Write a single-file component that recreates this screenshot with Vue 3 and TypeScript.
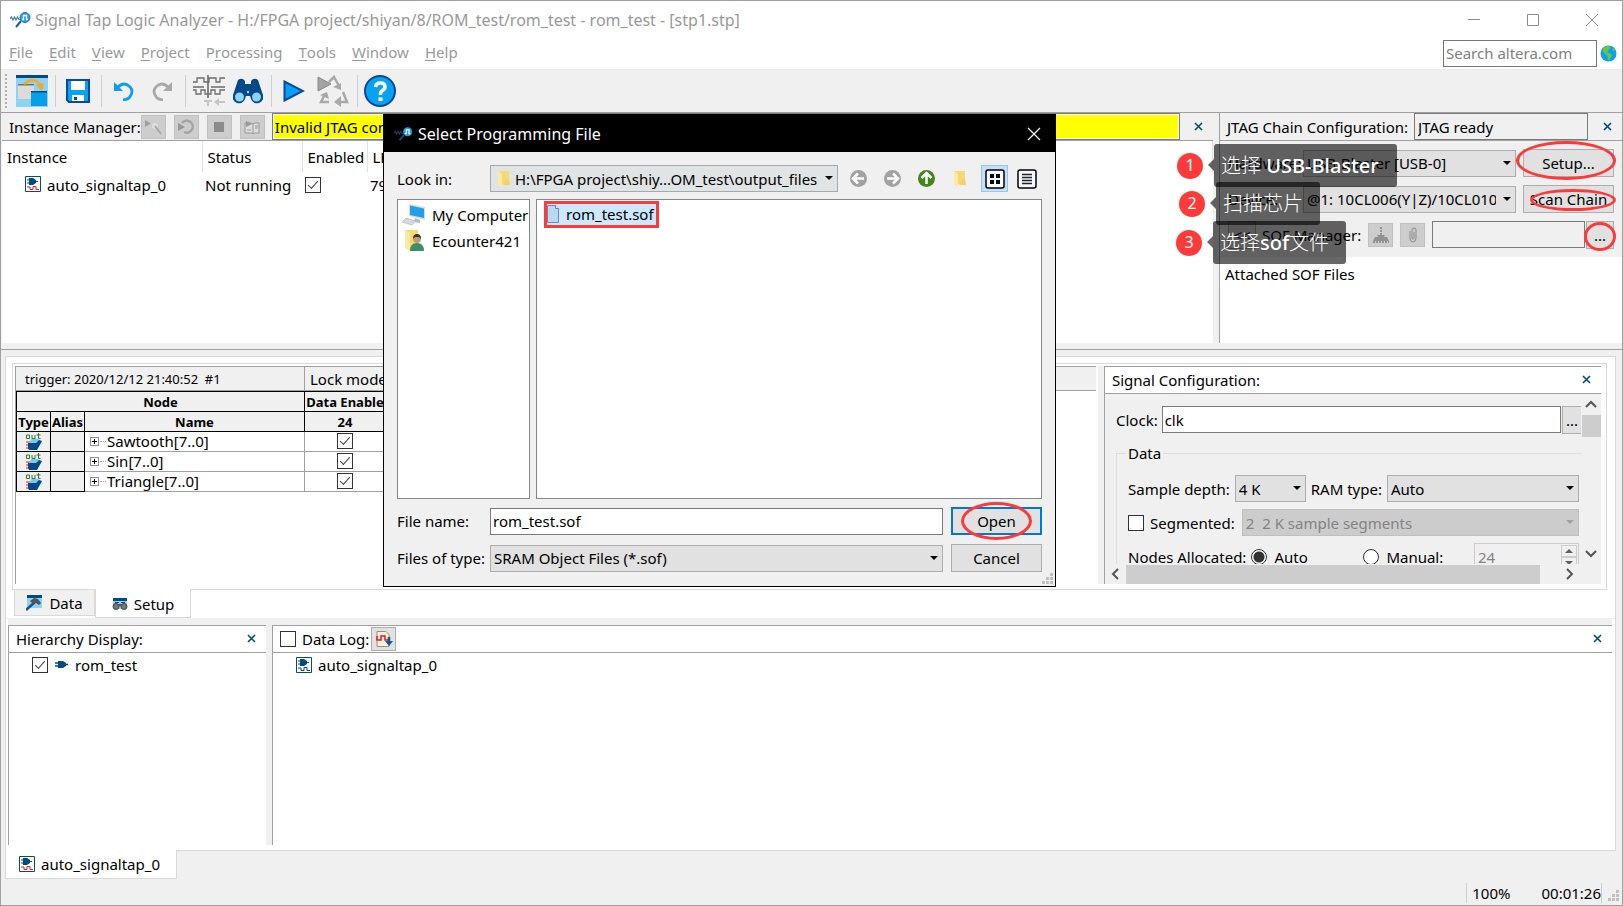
<script setup lang="ts">
import { ref } from 'vue'

interface SignalNode {
  name: string
  enabled: boolean
}

const menus: string[] = ['File', 'Edit', 'View', 'Project', 'Processing', 'Tools', 'Window', 'Help']
const accel: Record<string, number> = { Processing: 1 }
const menuParts = menus.map((m) => {
  const i = accel[m] ?? 0
  return { before: m.slice(0, i), key: m[i], after: m.slice(i + 1) }
})

const nodes = ref<SignalNode[]>([
  { name: 'Sawtooth[7..0]', enabled: true },
  { name: 'Sin[7..0]', enabled: true },
  { name: 'Triangle[7..0]', enabled: true },
])

const status = ref('Invalid JTAG configuration')
const jtagState = ref('JTAG ready')
const sofPath = ref('')
const clock = ref('clk')
const nodeCount = ref('24')
const fileName = ref('rom_test.sof')
const search = ref('')
const instanceEnabled = ref(true)
const hierarchyEnabled = ref(true)
const dataLog = ref(false)
const segmented = ref(false)
const allocation = ref('auto')
</script>

<template>
  <div class="window">
    <header class="titlebar">
      <svg class="app-icon" width="22" height="16" viewBox="0 0 22 16">
        <path d="M0 7l1.500-2 1.500 3 1.500-3 1.500 3 1.500-3 1.500 2.500h2" fill="none" stroke="#3b7ea8" stroke-width="1.200" />
        <path d="M11 9l-5 6" stroke="#1d5f94" stroke-width="2" />
        <circle cx="15" cy="5.500" r="5" fill="#2ba3e0" stroke="#1d74b0" />
        <path d="M12 7.500h1.500v-4h3v4h1.500" fill="none" stroke="#fff" stroke-width="1.300" />
      </svg>
      <h1>Signal Tap Logic Analyzer - H:/FPGA project/shiyan/8/ROM_test/rom_test - rom_test - [stp1.stp]</h1>
      <div class="caption-buttons">
        <button aria-label="Minimize"><svg width="14" height="14" viewBox="0 0 14 14"><path d="M1 6.500h12" /></svg></button>
        <button aria-label="Maximize"><svg width="14" height="14" viewBox="0 0 14 14"><path d="M1.500 1.500h11v11h-11z" /></svg></button>
        <button aria-label="Close"><svg width="14" height="14" viewBox="0 0 14 14"><path d="M1 1l12 12M13 1L1 13" /></svg></button>
      </div>
    </header>

    <nav class="menubar">
      <button v-for="m in menuParts" :key="m.key + m.after">{{ m.before }}<u>{{ m.key }}</u>{{ m.after }}</button>
      <div class="search">
        <input v-model="search" aria-label="Search altera.com" placeholder="Search altera.com" />
        <svg width="17" height="17" viewBox="0 0 17 17">
          <circle cx="8.500" cy="8.500" r="8" fill="#0da0f2" />
          <path d="M4 2l5-1 2 2-2 1-1 2-2 1 3 1 3 2-1 2-2 3-1 0-.5-4-2-2-3-3z" fill="#6cc832" />
          <path d="M13 3l2 2-1 1-2-1z" fill="#6cc832" />
        </svg>
      </div>
    </nav>

    <div class="toolbar">
      <span class="handle"></span>
      <button aria-label="Open window">
        <svg width="32" height="32" viewBox="0 0 32 32">
          <path d="M0 0h32v32H0z" fill="#8dd3f5" /><path d="M0 0h32v3H0z" fill="#004a86" />
          <path d="M2 9h16v15H2z" fill="#dedad5" /><path d="M2 9h16v1.500H2z" fill="#77736d" />
          <path d="M15 16h16v15H15z" fill="#05a0e8" /><path d="M15 16h16v1.500H15z" fill="#004a86" />
          <path d="M8 9Q17 1 25 10" fill="none" stroke="#f9a51f" stroke-width="2.500" /><path d="M20 10l8-2-2 8z" fill="#f9a51f" />
        </svg>
      </button>
      <span class="sep"></span>
      <button aria-label="Save">
        <svg width="24" height="24" viewBox="0 0 24 24">
          <path d="M1 1h22v22H3l-2-2z" fill="#05a5f5" stroke="#0b46a0" stroke-width="2" />
          <path d="M5 2h14v9H5zM6 16h12v6H6z" fill="#fff" /><path d="M8 18h3v3H8z" fill="#0b46a0" />
        </svg>
      </button>
      <span class="sep"></span>
      <button aria-label="Undo">
        <svg width="20" height="20" viewBox="0 0 20 20"><path d="M3 7Q9 0 15 5T15 17Q12 19 9 19" fill="none" stroke="#0b9ff0" stroke-width="2.800" /><path d="M0 1v9h9z" fill="#0b9ff0" /></svg>
      </button>
      <button aria-label="Redo">
        <svg width="20" height="20" viewBox="0 0 20 20"><path d="M17 7Q11 0 5 5T5 17Q8 19 11 19" fill="none" stroke="#a9a9a9" stroke-width="2.800" /><path d="M20 1v9h-9z" fill="#a9a9a9" /></svg>
      </button>
      <span class="sep"></span>
      <button class="wide" aria-label="Insert node">
        <svg width="34" height="32" viewBox="0 0 34 32" fill="none">
          <path d="M1 7h4V3h7v4h5V3h7v4h4V3h5M1 12h11M19 12h14M1 15h3v4h5v-4h4v4h6v-4h4v4h5v-4h5" stroke="#6b6b6b" stroke-width="1.300" />
          <path d="M16 0v23" stroke="#6b6b6b" stroke-width="1.600" />
          <path d="M12 26h8M16 26v5M24 27h9" stroke="#c4c4c4" stroke-width="2" /><path d="M22 27l5-4v8z" fill="#c4c4c4" />
        </svg>
      </button>
      <button aria-label="Find">
        <svg width="30" height="26" viewBox="0 0 30 26">
          <path d="M5 2Q9-1 12 3v3h6V3Q21-1 25 2l5 15a6 6 0 0 1-12 4l-1-3h-4l-1 3a6 6 0 0 1-12-4z" fill="#05498a" />
          <circle cx="6.500" cy="19" r="4.500" fill="#8dd3f5" /><circle cx="23.500" cy="19" r="4.500" fill="#8dd3f5" /><circle cx="15" cy="14" r="1.200" fill="#8dd3f5" />
        </svg>
      </button>
      <span class="sep"></span>
      <button aria-label="Run analysis">
        <svg width="22" height="22" viewBox="0 0 22 22"><path d="M1.500 1.500v19L20 11z" fill="#05a0f5" stroke="#0b46a0" stroke-width="2" /></svg>
      </button>
      <button class="wide" aria-label="Autorun analysis">
        <svg width="34" height="32" viewBox="0 0 34 32">
          <path d="M13 7l5-5 5 9M27 17l4 10h-8M13 27H5l4-8" fill="none" stroke="#a9a9a9" stroke-width="2.500" />
          <path d="M17 12l8-4v7zM25 21l-7 6 7 5zM4 20l7-3 2 7z" fill="#a9a9a9" />
          <path d="M2 2v14l13-7z" fill="#a3a3a3" stroke="#8a8a8a" />
        </svg>
      </button>
      <span class="sep"></span>
      <button aria-label="Help">
        <svg width="32" height="32" viewBox="0 0 32 32">
          <circle cx="16" cy="16" r="15" fill="#08a2f2" stroke="#0b46a0" stroke-width="2" />
          <path d="M11.500 12Q12 8 16.500 8T21 12Q21 14 18.500 15.500T16.500 20" fill="none" stroke="#fff" stroke-width="3.500" /><path d="M14.500 22.500h4v3.500h-4z" fill="#fff" />
        </svg>
      </button>
    </div>

    <main class="workspace">
      <div class="upper">
        <section class="instances">
          <div class="bar">
            <label for="status">Instance Manager:</label>
            <span class="tools">
              <button class="tool" disabled aria-label="Run"><svg width="18" height="18" viewBox="0 0 18 18"><path d="M1 2v7l6-3.500z" fill="#a0a0a0" /><circle cx="11" cy="8" r="3" fill="#ddd" /><path d="M11 8l6 8" stroke="#a8a8a8" stroke-width="2" /></svg></button>
              <button class="tool" disabled aria-label="Autorun"><svg width="18" height="18" viewBox="0 0 18 18"><path d="M5 5a6 6 0 1 1 2 9" fill="none" stroke="#a3a3a3" stroke-width="2.500" /><path d="M1 5v8l7-4z" fill="#989898" /></svg></button>
              <button class="tool" disabled aria-label="Stop"><svg width="18" height="18" viewBox="0 0 18 18"><path d="M4 4h10v10H4z" fill="#8b8b8b" /></svg></button>
              <button class="tool" disabled aria-label="Read data"><svg width="18" height="18" viewBox="0 0 18 18"><path d="M2 5h6l2 1 1-1h5v10H11l-1 1-1-1H2z" fill="#ddd" stroke="#999" /><path d="M3 3v6l6-3z" fill="#999" /><path d="M10 6v9M12 8h3M12 10h3M4 12h4" stroke="#999" /></svg></button>
            </span>
            <input id="status" v-model="status" class="status" readonly />
            <button class="close" aria-label="Close instance manager"><svg width="10" height="10" viewBox="0 0 10 10"><path d="M1 1l7 7M8 1L1 8" /></svg></button>
          </div>
          <table class="inst-table">
            <colgroup><col class="c1" /><col class="c2" /><col class="c3" /><col /></colgroup>
            <thead><tr><th>Instance</th><th>Status</th><th>Enabled</th><th>LEs: 791</th></tr></thead>
            <tbody>
              <tr>
                <td class="inst-name"><svg class="inst-icon" width="16" height="16" viewBox="0 0 16 16"><path d="M.5.5h15v15H.5z" fill="#fff" stroke="#004a86" /><path d="M2 4h3M2 7h3M10 5.500h3" stroke="#004a86" /><path d="M4 2h4l3 2v3L8 9H4z" fill="#004a86" /><path d="M2 11h3v2.500h3v-3h3v3h3" fill="none" stroke="#e31b23" /></svg>auto_signaltap_0</td>
                <td>Not running</td>
                <td><input v-model="instanceEnabled" type="checkbox" aria-label="Enable auto_signaltap_0" /></td>
                <td>791 cells</td>
              </tr>
            </tbody>
          </table>
        </section>

        <section class="jtag">
          <div class="bar">
            <label for="jtag">JTAG Chain Configuration:</label>
            <input id="jtag" v-model="jtagState" class="jtag-state" readonly />
            <button class="close" aria-label="Close JTAG configuration"><svg width="10" height="10" viewBox="0 0 10 10"><path d="M1 1l7 7M8 1L1 8" /></svg></button>
          </div>
          <div class="jtag-form">
            <div class="jtag-row">
              <label for="hw">Hardware:</label>
              <span class="combo"><select id="hw"><option>USB-Blaster [USB-0]</option></select></span>
              <button class="push">Setup...</button>
            </div>
            <div class="jtag-row">
              <label for="dev">Device:</label>
              <span class="combo"><select id="dev"><option>@1: 10CL006(Y|Z)/10CL010(Y|Z)/..</option></select></span>
              <button class="push">Scan Chain</button>
            </div>
            <div class="sof-row">
              <button class="push tiny">&lt;&lt;</button>
              <label for="sof">SOF Manager:</label>
              <button class="tool" disabled aria-label="Program device"><svg width="18" height="18" viewBox="0 0 18 18"><path d="M9 1v9M1 16h16" stroke="#929292" stroke-width="2" stroke-dasharray="2 1" /><path d="M1 15l2-4h3l-1-2h8l-1 2h3l2 4z" fill="#929292" /></svg></button>
              <button class="tool" disabled aria-label="Attach SOF"><svg width="18" height="18" viewBox="0 0 18 18"><path d="M6 5v7q0 4 3 4t3-4V4q0-2-2-2T8 4v8q0 1 1 1t1-1V6" fill="none" stroke="#8c8c8c" /></svg></button>
              <input id="sof" v-model="sofPath" class="sof" />
              <button class="push dots">...</button>
            </div>
          </div>
          <div class="attached">Attached SOF Files</div>
        </section>
      </div>

      <div class="divider"></div>

      <div class="page">
        <div class="setup">
          <section class="nodes">
            <div class="node-bar"><span class="trigger">trigger: 2020/12/12 21:40:52&nbsp; #1</span><label class="lock">Lock mode:</label></div>
            <table class="node-table">
              <colgroup><col class="n1" /><col class="n2" /><col class="n3" /><col class="n4" /></colgroup>
              <thead>
                <tr><th colspan="3">Node</th><th>Data Enable</th></tr>
                <tr><th>Type</th><th>Alias</th><th>Name</th><th>24</th></tr>
              </thead>
              <tbody>
                <tr v-for="n in nodes" :key="n.name">
                  <td class="dim"><svg width="18" height="18" viewBox="0 0 18 18"><path d="M1.500 2h3v3.500h-3zM7 2v3.500h3V2M11.500 2h4M13.500 0v5.500h2" fill="none" stroke="#2a7d2a" /><path d="M1 9h4M1 12h4M1 15h4" stroke="#e31b23" /><path d="M6 6h7l4 3-4 3H4z" fill="#7cc9ef" /><path d="M3 10h8l3-3 3 1-5 9H4l-1-2z" fill="#004a86" /></svg></td>
                  <td class="dim"></td>
                  <td class="node-name"><span class="node-cell"><button class="expander" :aria-label="'Expand ' + n.name"></button><span class="dotline"></span>{{ n.name }}</span></td>
                  <td class="mid"><input v-model="n.enabled" type="checkbox" :aria-label="'Data enable ' + n.name" /></td>
                </tr>
              </tbody>
            </table>
          </section>

          <section class="config">
            <div class="config-head"><h2>Signal Configuration:</h2><button class="close" aria-label="Close signal configuration"><svg width="10" height="10" viewBox="0 0 10 10"><path d="M1 1l7 7M8 1L1 8" /></svg></button></div>
            <div class="scroll-grid">
              <div class="config-body">
                <div class="clock-row">
                  <label for="clk">Clock:</label>
                  <input id="clk" v-model="clock" />
                  <button class="push clk-btn">...</button>
                </div>
                <fieldset>
                  <legend>Data</legend>
                  <div class="row">
                    <label for="depth">Sample depth:</label>
                    <span class="combo depth"><select id="depth"><option>4 K</option></select></span>
                    <label for="ram">RAM type:</label>
                    <span class="combo grow"><select id="ram"><option>Auto</option></select></span>
                  </div>
                  <div class="row seg-row">
                    <label class="check"><input v-model="segmented" type="checkbox" />Segmented:</label>
                    <span class="combo grow off"><select disabled aria-label="Segments"><option>2&nbsp; 2 K sample segments</option></select></span>
                  </div>
                  <div class="row alloc">
                    <span class="alloc-label">Nodes Allocated:</span>
                    <label class="radio auto"><input v-model="allocation" type="radio" value="auto" name="alloc" />Auto</label>
                    <label class="radio"><input v-model="allocation" type="radio" value="manual" name="alloc" />Manual:</label>
                    <span class="spin"><input v-model="nodeCount" disabled aria-label="Allocated nodes" /><span class="spin-btns"><i></i><i></i></span></span>
                  </div>
                </fieldset>
              </div>
              <div class="vbar"><svg width="12" height="8" viewBox="0 0 12 8"><path d="M1 7l5-5 5 5" /></svg><span class="vthumb"></span><svg class="last" width="12" height="8" viewBox="0 0 12 8"><path d="M1 1l5 5 5-5" /></svg></div>
              <div class="hbar"><svg width="8" height="12" viewBox="0 0 8 12"><path d="M7 1L2 6l5 5" /></svg><span class="hthumb"></span><svg class="last" width="8" height="12" viewBox="0 0 8 12"><path d="M1 1l5 5-5 5" /></svg></div>
            </div>
          </section>
        </div>

        <div class="tabs">
          <button class="tab">
            <svg width="16" height="16" viewBox="0 0 16 16"><path d="M1 0h15v13H1z" fill="#8dd3f5" /><path d="M1 0h15v3H1z" fill="#004a86" /><path d="M0 15L9 7" stroke="#0b58a0" stroke-width="2.500" /><path d="M4 6l4-3 4 1 3 4-2 2-3-2-3 1z" fill="#555" /></svg>Data
          </button>
          <button class="tab active">
            <svg width="16" height="16" viewBox="0 0 16 16"><path d="M1 2h14v11H1z" fill="#8dd3f5" /><path d="M1 2h14v3H1z" fill="#004a86" /><path d="M3 6.500h4M9 6.500h4" stroke="#004a86" /><circle cx="4" cy="10.500" r="3" fill="#777" stroke="#444" /><circle cx="12" cy="10.500" r="3" fill="#777" stroke="#444" /><path d="M6 9h4" stroke="#555" stroke-width="2" /></svg>Setup
          </button>
        </div>

        <div class="lower">
          <section class="hier">
            <div class="sub-head"><h2>Hierarchy Display:</h2><button class="close" aria-label="Close hierarchy display"><svg width="10" height="10" viewBox="0 0 10 10"><path d="M1 1l7 7M8 1L1 8" /></svg></button></div>
            <label class="tree-item"><input v-model="hierarchyEnabled" type="checkbox" /><svg width="13" height="10" viewBox="0 0 13 10"><path d="M0 3h4M0 6h4M9 4.500h4" stroke="#004a86" stroke-width="1.500" /><path d="M3 1h5l3 2v3L8 8H3z" fill="#004a86" /></svg>rom_test</label>
          </section>
          <section class="log">
            <div class="sub-head">
              <label class="check"><input v-model="dataLog" type="checkbox" />Data Log:</label>
              <button class="tool live" aria-label="Export log"><svg width="18" height="18" viewBox="0 0 18 18"><path d="M2 1.500h9l3 3v12H2z" fill="#fdf3dc" stroke="#a58a78" /><path d="M2 6v4h4V6h4v4h3" fill="none" stroke="#e31b23" stroke-width="1.500" /><path d="M14 7v5" stroke="#0b58a0" stroke-width="2.500" /><path d="M10 11h8l-4 5z" fill="#0b58a0" /></svg></button>
              <button class="close" aria-label="Close data log"><svg width="10" height="10" viewBox="0 0 10 10"><path d="M1 1l7 7M8 1L1 8" /></svg></button>
            </div>
            <div class="log-item"><svg class="inst-icon" width="16" height="16" viewBox="0 0 16 16"><path d="M.5.5h15v15H.5z" fill="#fff" stroke="#004a86" /><path d="M2 4h3M2 7h3M10 5.500h3" stroke="#004a86" /><path d="M4 2h4l3 2v3L8 9H4z" fill="#004a86" /><path d="M2 11h3v2.500h3v-3h3v3h3" fill="none" stroke="#004a86" /></svg>auto_signaltap_0</div>
          </section>
        </div>
      </div>

      <div class="file-tabs">
        <button class="file-tab"><svg class="inst-icon" width="16" height="16" viewBox="0 0 16 16"><path d="M.5.5h15v15H.5z" fill="#fff" stroke="#004a86" /><path d="M2 4h3M2 7h3M10 5.500h3" stroke="#004a86" /><path d="M4 2h4l3 2v3L8 9H4z" fill="#004a86" /><path d="M2 11h3v2.500h3v-3h3v3h3" fill="none" stroke="#e31b23" /></svg>auto_signaltap_0</button>
      </div>
    </main>

    <footer class="statusbar">
      <span class="zoom">100%</span><span class="time">00:01:26</span>
      <svg class="grip" width="11" height="11" viewBox="0 0 11 11"><path d="M8 0h3v3H8zM4 4h3v3H4zM8 4h3v3H8zM0 8h3v3H0zM4 8h3v3H4zM8 8h3v3H8z" fill="#bfbfbf" /></svg>
    </footer>

    <div class="dialog" role="dialog" aria-label="Select Programming File">
      <div class="dlg-title">
        <svg class="app-icon" width="20" height="16" viewBox="0 0 22 16">
          <path d="M0 7l1.500-2 1.500 3 1.500-3 1.500 3 1.500-3 1.500 2.500h2" fill="none" stroke="#17435e" stroke-width="1.200" />
          <path d="M11 9l-5 6" stroke="#174a72" stroke-width="2" />
          <circle cx="15" cy="5.500" r="5" fill="#1d9be0" /><path d="M12 7.500h1.500v-4h3v4h1.500" fill="none" stroke="#fff" stroke-width="1.300" />
        </svg>
        <h2>Select Programming File</h2>
        <button aria-label="Close dialog"><svg width="14" height="14" viewBox="0 0 14 14"><path d="M1 1l12 12M13 1L1 13" stroke="#fff" stroke-width="1.200" /></svg></button>
      </div>
      <div class="dlg-body">
        <div class="look">
          <label for="look">Look in:</label>
          <span class="combo grow folder-combo">
            <svg width="13" height="18" viewBox="0 0 13 18"><path d="M1 1h10v13H1z" fill="#f8d775" /><path d="M0 1l4 3v13l-4-2z" fill="#fde9a6" /><path d="M8 9h3l1 6H5z" fill="#f5cf6a" /></svg>
            <select id="look"><option>H:\FPGA project\shiy...OM_test\output_files</option></select>
          </span>
          <button aria-label="Back"><svg width="19" height="19" viewBox="0 0 19 19"><circle cx="9.500" cy="9.500" r="8.500" fill="#a2a2a2" /><path d="M4 9.500h11M9 4.500l-5 5 5 5" fill="none" stroke="#fff" stroke-width="2.500" /></svg></button>
          <button aria-label="Forward"><svg width="19" height="19" viewBox="0 0 19 19"><circle cx="9.500" cy="9.500" r="8.500" fill="#a2a2a2" /><path d="M4 9.500h11M10 4.500l5 5-5 5" fill="none" stroke="#fff" stroke-width="2.500" /></svg></button>
          <button aria-label="Parent directory"><svg width="19" height="19" viewBox="0 0 19 19"><circle cx="9.500" cy="9.500" r="8.500" fill="#42851c" /><path d="M9.500 15V4M4.500 9l5-5 5 5" fill="none" stroke="#fff" stroke-width="2.500" /></svg></button>
          <button aria-label="New folder"><svg width="13" height="18" viewBox="0 0 13 18"><path d="M1 1h10v13H1z" fill="#f8d775" /><path d="M0 1l4 3v13l-4-2z" fill="#fde9a6" /><path d="M8 9h3l1 6H5z" fill="#f5cf6a" /></svg></button>
          <button class="picked" aria-label="List view"><svg width="20" height="20" viewBox="0 0 20 20"><rect x="1" y="1" width="18" height="18" rx="2" fill="#f3f9ff" stroke="#000" stroke-width="1.500" /><path d="M5 5h4v4H5zM11 5h4v4h-4zM5 11h4v4H5zM11 11h4v4h-4z" /></svg></button>
          <button aria-label="Detail view"><svg width="20" height="20" viewBox="0 0 20 20"><rect x="1" y="1" width="18" height="18" rx="2" fill="#f3f9ff" stroke="#000" stroke-width="1.500" /><path d="M5 5.500h10M5 8.500h10M5 11.500h10M5 14.500h10" stroke="#222" stroke-width="1.500" /></svg></button>
        </div>
        <div class="panes">
          <ul class="places">
            <li><svg width="24" height="22" viewBox="0 0 24 22"><path d="M7 0l16 3v13L7 12z" fill="#d9dde0" /><path d="M8 1.500l14 3V14L8 11z" fill="#239fea" /><path d="M13 14l5 2v3l-6-1z" fill="#b5bbc0" /><path d="M0 18l4-4 10 3-4 4z" fill="#d5d9dc" stroke="#9aa" stroke-width=".5" /></svg>My Computer</li>
            <li><svg width="24" height="22" viewBox="0 0 24 22"><path d="M4 0h12v18H4z" fill="#f8d775" /><path d="M3 0l5 3v18l-5-3z" fill="#fde9a6" /><circle cx="15" cy="9" r="4" fill="#c29a72" /><path d="M11 9q0-5 4-5t4 5l-2-2h-4z" fill="#333" /><path d="M8 21q0-8 7-8t7 8z" fill="#3e8e68" /></svg>Ecounter421</li>
          </ul>
          <div class="files">
            <button class="file"><svg width="12" height="18" viewBox="0 0 12 18"><path d="M.5.500h8l3 3v14H.5z" fill="#b9d8f2" stroke="#6c8ba8" /><path d="M8.500.500v3h3" fill="#fff" stroke="#6c8ba8" /></svg>rom_test.sof</button>
          </div>
        </div>
        <div class="dlg-row">
          <label for="fname">File name:</label>
          <input id="fname" v-model="fileName" />
          <button class="push open">Open</button>
        </div>
        <div class="dlg-row">
          <label for="ftype">Files of type:</label>
          <span class="combo grow"><select id="ftype"><option>SRAM Object Files (*.sof)</option></select></span>
          <button class="push">Cancel</button>
        </div>
      </div>
      <svg class="grip dlg-grip" width="11" height="11" viewBox="0 0 11 11"><path d="M8 0h3v3H8zM4 4h3v3H4zM8 4h3v3H8zM0 8h3v3H0zM4 8h3v3H4zM8 8h3v3H8z" fill="#bfbfbf" /></svg>
      <span class="ring ring-open"></span>
    </div>

    <div class="note note-1"><b>1</b><span>选择 <em>USB-Blaster</em></span></div>
    <div class="note note-2"><b>2</b><span>扫描芯片</span></div>
    <div class="note note-3"><b>3</b><span>选择<em>sof</em>文件</span></div>
    <span class="ring ring-setup"></span>
    <span class="ring ring-scan"></span>
    <span class="ring ring-dots"></span>
  </div>
</template>

<style>
body {
  margin: 0;
}
</style>

<style scoped>
.window,
.window * {
  box-sizing: border-box;
}
.window {
  position: relative;
  display: flex;
  flex-direction: column;
  height: 100vh;
  border: 1px solid #a0a0a0;
  background: #f0f0f0;
  color: #000;
  font: 15px/20px "Noto Sans", "Open Sans", sans-serif;
  overflow: hidden;
}
button,
input,
select {
  margin: 0;
  font: inherit;
  color: inherit;
}
button {
  display: flex;
  align-items: center;
  justify-content: center;
  padding: 0;
  border: 0;
  background: none;
  white-space: nowrap;
}
h1,
h2 {
  margin: 0;
  font: inherit;
}
label {
  white-space: nowrap;
}
svg {
  flex: none;
}
.titlebar {
  display: flex;
  align-items: center;
  flex: none;
  height: 37px;
  padding: 0 1px 0 9px;
  background: #fff;
  color: #999;
}
.titlebar h1 {
  margin-left: 3px;
  flex: 1;
  font-size: 16px;
  white-space: nowrap;
}
.caption-buttons {
  display: flex;
}
.caption-buttons button {
  width: 59px;
  height: 36px;
}
.caption-buttons path {
  fill: none;
  stroke: #8a8a8a;
}
.menubar {
  display: flex;
  align-items: center;
  flex: none;
  gap: 16px;
  height: 32px;
  padding: 0 5px 4px 8px;
  background: #fff;
  color: #999;
  border-bottom: 1px solid #eaeaea;
}
.menubar u {
  text-underline-offset: 2px;
}
.search {
  display: flex;
  align-items: center;
  gap: 3px;
  margin: 3px 0 0 auto;
}
.search input {
  width: 154px;
  height: 27px;
  padding: 0 2px;
  border: 1px solid #767676;
}
.search input::placeholder {
  color: #808080;
}
input {
  background: #fff;
  border: 1px solid #7a7a7a;
  border-radius: 0;
  outline: none;
}
.toolbar {
  display: flex;
  align-items: center;
  flex: none;
  gap: 6px;
  height: 43px;
  padding: 0 4px;
  border-bottom: 1px solid #a0a0a0;
}
.handle {
  width: 2px;
  height: 34px;
  margin-right: 3px;
  border-left: 2px dotted #b0b0b0;
}
.toolbar button {
  width: 32px;
  height: 34px;
}
.toolbar .wide {
  width: 34px;
}
.sep {
  width: 1px;
  height: 32px;
  margin-left: 1px;
  background: #cfcfcf;
}
.workspace {
  display: grid;
  flex: 1;
  min-height: 0;
  grid-template-rows: minmax(0, 230fr) 13px minmax(0, 494fr) 28px;
}
.upper {
  display: flex;
  gap: 6px;
  min-height: 0;
}
.instances {
  flex: 1;
  min-width: 0;
  background: #fff;
  margin-left: 1px;
  overflow: hidden;
}
.bar {
  display: flex;
  align-items: center;
  height: 28px;
  background: #f0f0f0;
  border-bottom: 1px solid #a0a0a0;
  padding-left: 7px;
}
.tools {
  display: flex;
  gap: 8px;
  margin-right: 7px;
}
.tool {
  width: 25px;
  height: 24px;
  flex: none;
  border: 1px solid #c0c0c0;
  background: #cdcdcd;
}
.status {
  flex: 1;
  min-width: 0;
  height: 27px;
  padding: 0 2px;
  background: #ff0;
  border: 1px solid #7a7a7a;
  box-shadow: inset 0 0 0 1px #fff;
}
.close {
  flex: none;
  width: 24px;
  height: 24px;
}
.close path {
  fill: none;
  stroke: #004a86;
  stroke-width: 1.6;
}
.instances .close {
  margin: 0 2px 0 7px;
}
.inst-table {
  width: 100%;
  table-layout: fixed;
  border-collapse: collapse;
}
.c1 {
  width: 200px;
}
.c2 {
  width: 100px;
}
.c3 {
  width: 65px;
}
.inst-table th {
  height: 31px;
  padding: 1px 5px 0;
  border-right: 1px solid #e0e0e0;
  font-weight: 400;
  text-align: left;
  white-space: nowrap;
}
.inst-table td {
  height: 26px;
  padding: 0 3px;
  white-space: nowrap;
}
.inst-table .inst-name {
  padding-left: 23px;
}
.inst-icon {
  margin-right: 6px;
}
.inst-name .inst-icon {
  vertical-align: -1px;
}
input[type='checkbox'] {
  appearance: none;
  display: inline-block;
  position: relative;
  flex: none;
  width: 16px;
  height: 16px;
  border: 1px solid #333;
  vertical-align: -2px;
}
input[type='checkbox']:checked::after {
  content: '';
  display: block;
  width: 9px;
  height: 4px;
  margin: 3px 2px;
  border: solid #444;
  border-width: 0 0 1px 1px;
  transform: rotate(-48deg);
}
.jtag {
  display: flex;
  flex-direction: column;
  flex: 0 0 403px;
  min-width: 0;
  border-left: 1px solid #a0a0a0;
}
.jtag-state {
  width: 174px;
  height: 27px;
  margin: 0 8px 0 auto;
  padding: 0 3px;
  background: #f0f0f0;
}
.jtag .close {
  margin-right: 2px;
}
.jtag-form {
  display: flex;
  flex-direction: column;
  gap: 9px;
  padding: 8px 8px 9px;
}
.jtag-row {
  display: grid;
  grid-template-columns: 68px minmax(0, 1fr) 91px;
  gap: 7px;
  align-items: center;
  height: 27px;
}
.sof-row {
  display: flex;
  align-items: center;
  height: 27px;
}
.tiny {
  width: 28px;
  margin-right: 6px;
}
.sof-row .tool {
  margin-left: 7px;
}
.sof {
  flex: 1;
  min-width: 0;
  height: 27px;
  margin: 0 1px 0 7px;
  background: #f0f0f0;
}
.dots {
  width: 28px;
}
.push {
  flex: none;
  height: 28px;
  background: #e1e1e1;
  border: 1px solid #adadad;
}
.combo {
  position: relative;
  display: block;
  min-width: 0;
}
.combo select {
  appearance: none;
  display: block;
  width: 100%;
  height: 27px;
  padding: 0 19px 0 3px;
  border: 1px solid #adadad;
  border-radius: 0;
  background: #e1e1e1;
}
.combo::after {
  content: '';
  position: absolute;
  right: 5px;
  top: 11px;
  border: 4px solid transparent;
  border-top-color: #000;
  border-bottom: 0;
}
.combo.off select {
  background: #ccc;
  border-color: #bfbfbf;
  color: #838383;
  opacity: 1;
}
.combo.off::after {
  border-top-color: #a0a0a0;
}
.grow {
  flex: 1;
}
.attached {
  flex: 1;
  padding: 7px 5px;
  background: #fff;
}
.divider {
  align-self: start;
  height: 7px;
  border-bottom: 1px solid #a0a0a0;
}
.page {
  display: grid;
  grid-template-rows: minmax(0, 227fr) 29px 6px minmax(0, 220fr);
  margin: 0 6px 0 4px;
  padding: 6px 0 5px;
  background: #fff;
  border: 1px solid #d9d9d9;
}
.setup {
  display: flex;
  gap: 2px;
  margin: 0 8px 0 6px;
  padding: 2px 5px 5px 2px;
  border: 1px solid #d9d9d9;
  min-height: 0;
}
.nodes {
  flex: 1;
  min-width: 0;
  overflow: hidden;
  border: 1px solid #a0a0a0;
  border-width: 1px 0 0 1px;
}
.node-bar {
  display: flex;
  height: 24px;
  background: #f0f0f0;
  border-bottom: 1px solid #a0a0a0;
}
.trigger {
  width: 289px;
  padding: 2px 0 0 9px;
  border-right: 1px solid #a0a0a0;
  font-size: 13px;
}
.lock {
  padding: 2px 5px 0;
}
.node-table {
  width: 370px;
  table-layout: fixed;
  border-collapse: collapse;
}
.n1 {
  width: 34px;
}
.n2 {
  width: 34px;
}
.n3 {
  width: 220px;
}
.node-table th {
  height: 20px;
  padding: 1px 0 0;
  overflow: hidden;
  background: #f0f0f0;
  border: 1px solid #000;
  font-size: 13px;
  line-height: 18px;
  white-space: nowrap;
}
.node-table td {
  height: 20px;
  padding: 0;
  border: 1px solid #a0a0a0;
  line-height: 17px;
}
.node-table .dim {
  background: #f0f0f0;
  border-color: #000;
  text-align: center;
}
.node-table svg {
  display: block;
  margin: 0 auto;
}
.mid {
  text-align: center;
}
.node-cell {
  display: flex;
  align-items: center;
}
.expander {
  position: relative;
  width: 9px;
  height: 9px;
  margin-left: 5px;
  border: 1px solid #909090;
  background: linear-gradient(#000, #000) center / 5px 1px no-repeat, linear-gradient(#000, #000) center / 1px 5px no-repeat, #fff;
}
.dotline {
  width: 6px;
  margin: 0 1px;
  border-top: 1px dotted #a0a0a0;
}
.config {
  display: flex;
  flex-direction: column;
  flex: 0 0 503px;
  min-width: 0;
  border-left: 6px solid #f0f0f0;
}
.config-head {
  display: flex;
  align-items: center;
  justify-content: space-between;
  flex: none;
  height: 28px;
  padding: 0 2px 0 7px;
  border: 1px solid #a0a0a0;
  border-right: 0;
}
.scroll-grid {
  display: grid;
  flex: 1;
  min-height: 0;
  grid-template: minmax(0, 1fr) 20px / minmax(0, 1fr) 20px;
  border-left: 1px solid #a0a0a0;
  background: #f0f0f0;
}
.config-body {
  overflow: hidden;
  padding: 12px 0 0 11px;
}
.clock-row {
  display: flex;
  align-items: center;
  height: 27px;
}
.clock-row input {
  flex: 1;
  min-width: 0;
  height: 27px;
  margin: 0 1px 0 4px;
  padding: 0 2px;
}
.clk-btn {
  width: 19px;
  border-right: 0;
  overflow: hidden;
}
fieldset {
  margin: 10px 0 0;
  padding: 12px 2px 0 11px;
  border: 1px solid #dcdcdc;
  border-right: 0;
}
legend {
  margin-left: -2px;
  padding: 0 2px;
}
.row {
  display: flex;
  align-items: center;
  gap: 5px;
  height: 27px;
  margin-bottom: 7px;
}
.depth {
  width: 71px;
}
.seg-row {
  gap: 7px;
}
.check {
  display: flex;
  align-items: center;
  gap: 6px;
}
.radio {
  display: flex;
  align-items: center;
  gap: 7px;
}
.radio.auto {
  width: 107px;
}
input[type='radio'] {
  appearance: none;
  width: 16px;
  height: 16px;
  border: 1px solid #333;
  border-radius: 50%;
}
input[type='radio']:checked {
  background: radial-gradient(circle, #333 0 5px, #fff 6px);
}
.spin {
  display: flex;
  width: 105px;
  height: 27px;
  margin-left: auto;
  border: 1px solid #ccc;
}
.spin input {
  flex: 1;
  min-width: 0;
  border: 0;
  padding: 0 3px;
  background: none;
  color: #838383;
}
.spin-btns {
  display: grid;
  width: 17px;
  padding: 1px 1px 0 0;
}
.spin-btns i {
  display: grid;
  place-items: center;
  border: 1px solid #ccc;
}
.spin-btns i::after {
  content: '';
  border: 4px solid transparent;
  border-bottom-color: #606060;
  border-top: 0;
}
.spin-btns i:last-child::after {
  border: 4px solid transparent;
  border-top-color: #606060;
  border-bottom: 0;
}
.vbar {
  display: flex;
  flex-direction: column;
  align-items: center;
  padding: 6px 0;
}
.vbar path,
.hbar path {
  fill: none;
  stroke: #555;
  stroke-width: 2;
}
.vthumb {
  width: 19px;
  height: 22px;
  margin-top: 7px;
  background: #cdcdcd;
}
.last {
  margin-top: auto;
}
.hbar {
  display: flex;
  align-items: center;
  padding: 0 7px 0 6px;
}
.hthumb {
  width: 414px;
  height: 19px;
  margin-left: 7px;
  background: #cdcdcd;
}
.hbar .last {
  margin: 0 0 0 auto;
}
.tabs {
  display: flex;
  align-items: flex-start;
  padding-left: 8px;
  border-bottom: 1px solid #f0f0f0;
}
.tab {
  width: 81px;
  height: 26px;
  gap: 7px;
  background: #f0f0f0;
  border: 1px solid #d9d9d9;
  border-top: 0;
}
.tab.active {
  width: 96px;
  height: 29px;
  gap: 6px;
  background: #fff;
  margin-top: -1px;
  padding-top: 1px;
}
.lower {
  grid-row: 4;
  display: flex;
  min-height: 0;
  margin: 0 3px 0 2px;
  box-shadow: 0 -6px 0 #f0f0f0;
}
.hier {
  flex: 0 0 258px;
  border-left: 1px solid #a0a0a0;
}
.log {
  flex: 1;
  border-left: 6px solid #f0f0f0;
  background: linear-gradient(#a0a0a0, #a0a0a0) 0 0 / 1px 100% no-repeat;
}
.sub-head {
  display: flex;
  align-items: center;
  height: 28px;
  padding: 0 2px 0 7px;
  border: 1px solid #a0a0a0;
  border-width: 1px 0;
}
.sub-head .close {
  margin-left: auto;
}
.log .sub-head {
  border-left-width: 1px;
}
.tool.live {
  margin-left: 2px;
  background: #e1e1e1;
  border-color: #adadad;
}
.tree-item,
.log-item {
  display: flex;
  align-items: center;
  height: 24px;
}
.tree-item {
  gap: 7px;
  padding-left: 23px;
}
.log-item {
  padding-left: 24px;
}
.file-tabs {
  display: flex;
  margin: 0 6px 0 4px;
}
.file-tab {
  width: 172px;
  height: 29px;
  margin-top: -1px;
  padding: 0 3px 0 0;
  background: #fff;
  border: 1px solid #d9d9d9;
  border-top: 0;
}
.statusbar {
  display: flex;
  align-items: center;
  justify-content: flex-end;
  flex: none;
  height: 26px;
  padding: 2px 3px 0 0;
}
.zoom {
  padding-left: 5px;
  border-left: 1px solid #cfcfcf;
}
.time {
  margin-left: 31px;
  border-right: 1px solid #cfcfcf;
}
.statusbar .grip {
  margin: 4px 0 0 6px;
}
.dialog {
  position: absolute;
  left: 382px;
  top: 113px;
  width: 673px;
  background: #f0f0f0;
  border: 1px solid #000;
}
.dlg-title {
  display: flex;
  align-items: center;
  height: 37px;
  padding-left: 10px;
  background: #000;
  color: #fff;
}
.dlg-title h2 {
  flex: 1;
  margin-left: 4px;
  font-size: 16px;
}
.dlg-title button {
  width: 43px;
  height: 36px;
}
.dlg-body {
  padding: 13px 13px 14px;
}
.look {
  display: flex;
  align-items: center;
  height: 27px;
  margin-bottom: 7px;
}
.look label,
.dlg-row label {
  flex: none;
  width: 93px;
}
.look button {
  width: 34px;
  height: 27px;
}
.folder-combo {
  margin-right: 3px;
}
.folder-combo svg {
  position: absolute;
  left: 8px;
  top: 5px;
}
.folder-combo select {
  padding: 0 12px 0 24px;
  border-color: #a0abb0;
  background: #e0e4e4;
}
.look .picked {
  width: 27px;
  margin: 0 4px;
  background: #c5dff5;
  border: 1px solid #90c8f6;
}
.look button:last-child {
  width: 30px;
}
.panes {
  display: flex;
  gap: 6px;
  height: 300px;
  margin-bottom: 8px;
}
.places,
.files {
  margin: 0;
  background: #fff;
  border: 1px solid #828790;
}
.places {
  flex: 0 0 133px;
  min-width: 0;
  padding: 2px 0 2px 4px;
  list-style: none;
}
.places li {
  display: flex;
  align-items: center;
  gap: 6px;
  height: 26px;
  white-space: nowrap;
}
.files {
  flex: 1;
  padding: 1px 7px;
}
.file {
  gap: 7px;
  height: 27px;
  padding: 0 2px 2px 0;
  background: #cce8ff;
  border: 3px solid #fd3a3a;
}
.dlg-row {
  display: flex;
  align-items: center;
  height: 28px;
  margin-bottom: 9px;
}
.dlg-row:last-child {
  margin-bottom: 0;
}
.dlg-row input {
  flex: 1;
  height: 27px;
  padding: 0 2px;
}
.dlg-row .push {
  width: 91px;
  margin-left: 8px;
}
.dlg-row .open {
  border: 2px solid #0078d7;
}
.dlg-grip {
  position: absolute;
  right: 2px;
  bottom: 2px;
}
.ring {
  position: absolute;
  border: 3px solid #fd3a3a;
  border-radius: 50%;
  pointer-events: none;
}
.ring-open {
  right: 23px;
  top: 387px;
  width: 71px;
  height: 38px;
}
.ring-setup {
  right: 6px;
  top: 140px;
  width: 100px;
  height: 39px;
}
.ring-scan {
  right: 6px;
  top: 188px;
  width: 86px;
  height: 22px;
}
.ring-dots {
  right: 6px;
  top: 221px;
  width: 32px;
  height: 29px;
}
.note {
  position: absolute;
  display: flex;
  align-items: center;
  gap: 11px;
  color: #fff;
  font-family: "Noto Sans", "Noto Sans CJK SC", sans-serif;
  font-weight: 300;
}
.note b {
  width: 26px;
  height: 26px;
  border-radius: 50%;
  background: #fd3a3a;
  font-size: 16px;
  font-weight: 400;
  line-height: 25px;
  text-align: center;
}
.note span {
  position: relative;
  height: 43px;
  padding: 0 7px;
  border-radius: 3px;
  background: rgba(0, 0, 0, 0.6);
  font-size: 20px;
  line-height: 43px;
  white-space: nowrap;
}
.note span::before {
  content: '';
  position: absolute;
  right: 100%;
  top: 15px;
  border: 6px solid transparent;
  border-right-color: rgba(0, 0, 0, 0.6);
  border-left: 0;
}
.note em {
  font-style: normal;
  font-weight: 500;
}
.note-1 {
  right: 225px;
  top: 143px;
}
.note-1 span {
  width: 183px;
}
.note-2 {
  right: 302px;
  top: 181px;
}
.note-2 span {
  width: 104px;
}
.note-3 {
  right: 276px;
  top: 220px;
}
.note-3 span {
  width: 133px;
}
</style>
